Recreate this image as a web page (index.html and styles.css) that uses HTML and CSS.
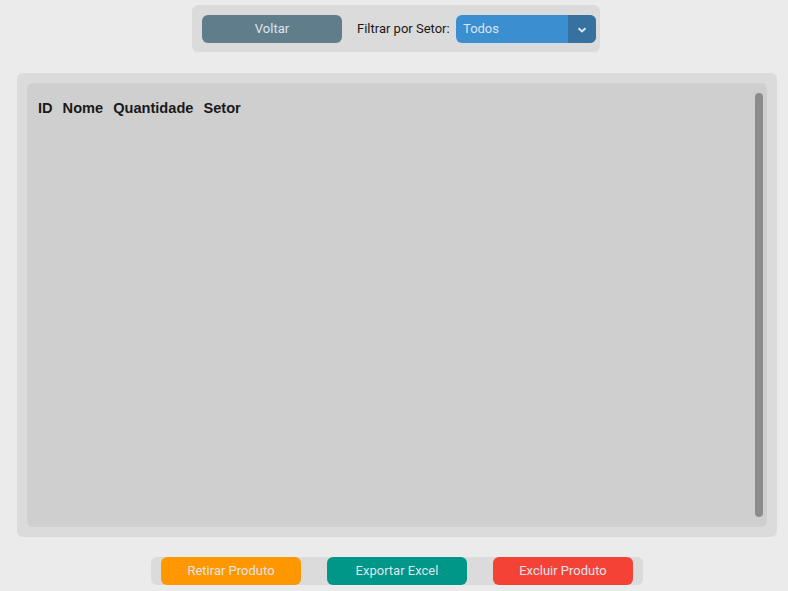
FILE: index.html
```html
<!DOCTYPE html>
<html lang="pt">
<head>
<meta charset="utf-8">
<title>Estoque</title>
<link rel="stylesheet" href="styles.css">
</head>
<body>
<div class="page">
  <div class="topbar">
    <button class="btn btn-back">Voltar</button>
    <span class="filter-label">Filtrar por Setor:</span>
    <div class="select">
      <span class="select-value">Todos</span>
      <span class="select-arrow">
        <svg width="10" height="6" viewBox="0 0 10 6"><polyline points="1.5,1.2 5,4.5 8.5,1.2" fill="none" stroke="#dce4ee" stroke-width="2"/></svg>
      </span>
    </div>
  </div>

  <div class="main">
    <div class="scroll">
      <div class="content">
        <div class="header">
          <span>ID</span>
          <span>Nome</span>
          <span>Quantidade</span>
          <span>Setor</span>
        </div>
      </div>
      <div class="scrollbar"></div>
    </div>
  </div>

  <div class="bottombar">
    <button class="btn btn-orange">Retirar Produto</button>
    <button class="btn btn-teal">Exportar Excel</button>
    <button class="btn btn-red">Excluir Produto</button>
  </div>
</div>
</body>
</html>
```

FILE: styles.css
```css
* { box-sizing: border-box; }
html, body {
  margin: 0;
  padding: 0;
  background: #ebebeb;
  font-family: Roboto, "Liberation Sans", sans-serif;
  font-size: 13px;
}
.page {
  width: 788px;
  height: 591px;
  display: flex;
  flex-direction: column;
  align-items: center;
  padding: 5px 0 0 6px;
}
.topbar {
  width: 408px;
  height: 47px;
  margin-left: -2px;
  background: #dbdbdb;
  border-radius: 6px;
  padding: 10px 4px 9px 10px;
  display: flex;
  align-items: center;
}
.btn {
  border: none;
  width: 140px;
  height: 28px;
  border-radius: 6px;
  color: #dce4ee;
  font-family: Roboto, "Liberation Sans", sans-serif;
  font-size: 13px;
  padding: 0 0 2px 0;
  display: flex;
  align-items: center;
  justify-content: center;
}
.btn-back { background: #607d8b; margin-right: 15px; }
.filter-label {
  width: 89px;
  margin-right: 10px;
  color: #1a1a1a;
  white-space: nowrap;
  margin-top: -1px;
}
.select {
  width: 140px;
  height: 28px;
  border-radius: 6px;
  background: #3b8ed0;
  display: flex;
  overflow: hidden;
}
.select-value {
  flex: 1;
  display: flex;
  align-items: center;
  padding-left: 7px;
  padding-bottom: 1px;
  color: #dce4ee;
}
.select-arrow {
  width: 28px;
  background: #36719f;
  display: flex;
  align-items: center;
  justify-content: center;
}
.select-arrow svg { display: block; margin-top: 1px; }
.main {
  margin-top: 21px;
  width: 760px;
  height: 464px;
  background: #dbdbdb;
  border-radius: 6px;
  padding: 10px;
}
.scroll {
  width: 100%;
  height: 100%;
  background: #cfcfcf;
  border-radius: 6px;
  display: flex;
}
.content {
  flex: 1;
  padding: 17px 0 0 11px;
}
.header {
  display: flex;
  gap: 10px;
  font-family: "Liberation Sans", Arial, sans-serif;
  font-weight: bold;
  font-size: 14.6px;
  line-height: 17px;
  color: #1a1a1a;
}
.scrollbar {
  width: 8px;
  margin: 10px 4px 10px 0;
  background: #8c8c8c;
  border-radius: 4px;
}
.bottombar {
  margin-top: 20px;
  width: 492px;
  height: 28px;
  background: #dbdbdb;
  border-radius: 6px;
  padding: 0 10px;
  display: flex;
  justify-content: space-between;
}
.btn-orange { background: #ff9800; }
.btn-teal { background: #009688; }
.btn-red { background: #f44336; }
```
